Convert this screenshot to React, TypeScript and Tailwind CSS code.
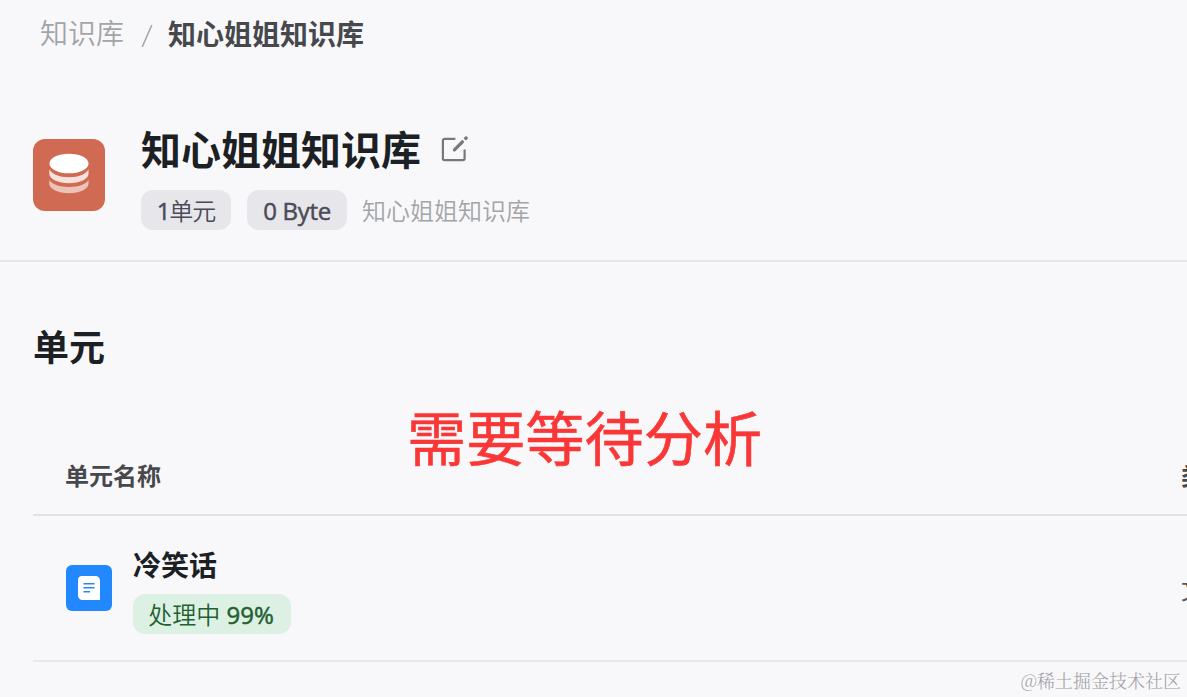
import React from "react";

const units = [
    {name: "冷笑话", status: "处理中", progress: 99, type: "文档"},
];

function DatabaseIcon() {
    return (
        <div className="flex h-[72px] w-[72px] shrink-0 items-center justify-center rounded-xl bg-[#d06a52]">
            <svg width="72" height="72" viewBox="0 0 72 72" fill="#fff">
                <ellipse cx="36" cy="24.5" rx="19.5" ry="9.8"/>
                <path
                    d="M16.3 30.2C19 35 26 38.2 36 38.2S53 35 55.5 30.2V35C55.5 40 47 44.2 36 44.2S16.3 40 16.3 35Z"
                    opacity=".8"
                />
                <path
                    d="M16.3 40.8C19 45.4 26 48 36 48S53 45.4 55.5 40.8V45C55.5 50 47 54.2 36 54.2S16.3 50 16.3 45Z"
                    opacity=".6"
                />
            </svg>
        </div>
    );
}

function EditIcon() {
    return (
        <svg className="overflow-visible" width="28" height="28" viewBox="0 0 28 28" fill="none" stroke="#77787a" strokeLinejoin="round">
            <path d="M15.4 2.9H4.6a1.7 1.7 0 0 0-1.7 1.7v17.9a1.7 1.7 0 0 0 1.7 1.7h18.3a1.7 1.7 0 0 0 1.7-1.7V13.4" strokeWidth="2.2"/>
            <path d="M14.4 13.8L22.4 5.8" strokeWidth="3.3" strokeLinecap="round"/>
            <path d="M25.8 2.3l.3-.3" strokeWidth="3.5" strokeLinecap="round"/>
        </svg>
    );
}

function DocumentIcon() {
    return (
        <div className="h-[46px] w-[46px] shrink-0 rounded-md bg-[#2288ff]">
            <svg width="46" height="46" viewBox="0 0 46 46">
                <path d="M16 11H29.5A4.5 4.5 0 0 1 34 15.5V35H16.5A4.5 4.5 0 0 1 12 30.5V15A4 4 0 0 1 16 11Z" fill="#fff"/>
                <path d="M17.5 18.8h11M17.5 22.8h11M17.5 26.8h6.5" stroke="#2288ff" strokeWidth="1.6"/>
            </svg>
        </div>
    );
}

export default function App() {
    return (
        <div className="relative h-[697px] w-full overflow-hidden bg-[#f8f8fb] font-['Open_Sans','Noto_Sans_CJK_SC',sans-serif] text-[#1c1f23]">
            <nav className="flex h-[67px] items-center pl-10 text-[28px] leading-10">
                <span className="pb-[3px] font-['Noto_Sans_CJK_SC_DemiLight','Noto_Sans_CJK_SC',sans-serif] font-[350] text-[#a3a4a6]">知识库</span>
                <svg className="mt-1 ml-[17px] shrink-0" width="12" height="26" viewBox="0 0 12 26">
                    <path d="M10.8 2L1.2 24" stroke="#a3a4a6" strokeWidth="1.5"/>
                </svg>
                <span className="ml-[15px] font-bold text-[#46484b]">知心姐姐知识库</span>
            </nav>

            <header className="flex h-[195px] items-start border-b-2 border-[#e6e6e9] pt-[59px] pl-[33px]">
                <div className="pt-[13px]">
                    <DatabaseIcon/>
                </div>
                <div className="ml-9">
                    <div className="flex h-12 items-center">
                        <h1 className="text-[40px] leading-[48px] font-bold">知心姐姐知识库</h1>
                        <button className="ml-[19px]" type="button" aria-label="编辑">
                            <EditIcon/>
                        </button>
                    </div>
                    <div className="mt-4 flex h-10 items-center text-2xl">
                        <span className="flex h-10 w-[90px] items-center justify-center rounded-xl bg-[#e7e7eb] pt-0.5 tracking-[-1px] whitespace-nowrap text-[#4b4a59]">
                            <span className="[-webkit-text-stroke:0.5px_#4b4a59]">1</span>
                            <span className="font-[350]">单元</span>
                        </span>
                        <span className="ml-4 flex h-10 w-[100px] items-center justify-center rounded-xl bg-[#e7e7eb] pt-0.5 tracking-[-0.3px] whitespace-nowrap text-[#4b4a59] [-webkit-text-stroke:0.5px_#4b4a59]">
                            0 Byte
                        </span>
                        <span className="ml-[15px] pb-px font-['Noto_Sans_CJK_SC_DemiLight','Noto_Sans_CJK_SC',sans-serif] font-[350] text-[#a3a4a6]">知心姐姐知识库</span>
                    </div>
                </div>
            </header>

            <main className="pt-[62px] pl-[33px]">
                <h2 className="text-4xl leading-[48px] font-bold">单元</h2>

                <div className="mt-16 flex h-20 items-center border-b-2 border-[#e2e2e5] pt-0.5 pl-8 text-2xl font-bold text-[#46484b]">
                    <span className="w-[1116px] shrink-0">单元名称</span>
                    <span className="shrink-0">类型</span>
                </div>

                {units.map((unit) => (
                    <div key={unit.name} className="flex h-[146px] items-center border-b-2 border-[#e9e9ec] pl-[33px]">
                        <DocumentIcon/>
                        <div className="ml-[21px] w-[1048px] shrink-0 pt-[3px]">
                            <div className="text-[28px] leading-10 font-bold">{unit.name}</div>
                            <div className="mt-[9px] flex h-10 w-[158px] items-center justify-center rounded-xl bg-[#dcf1e4] pt-0.5 pr-0.5 text-2xl whitespace-pre text-[#245f30]">
                                <span className="font-[350]">{unit.status} </span>
                                <span className="[-webkit-text-stroke:0.5px_#245f30]">{unit.progress}%</span>
                            </div>
                        </div>
                        <span className="shrink-0 pt-1 text-2xl text-[#55575a]">{unit.type}</span>
                    </div>
                ))}
            </main>

            <div className="absolute top-[394px] left-[407px] text-[59.2px] leading-[88px] whitespace-nowrap text-[#fa3737] [-webkit-text-stroke:0.6px_#fa3737]">
                需要等待分析
            </div>
            <div className="absolute top-[668px] right-[6px] font-['Noto_Serif_CJK_SC','Liberation_Serif','Noto_Sans_CJK_SC',serif] text-[18px] leading-6 font-light whitespace-nowrap text-[#a0a0a3]">
                @稀土掘金技术社区
            </div>
        </div>
    );
}
